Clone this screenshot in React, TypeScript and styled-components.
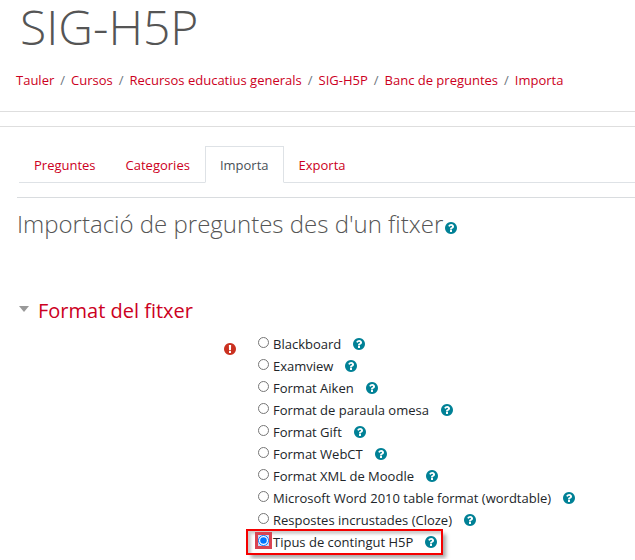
import React, { useState } from "react";
import styled, { createGlobalStyle } from "styled-components";

const GlobalStyle = createGlobalStyle`
  *, *::before, *::after { box-sizing: border-box; }
  body {
    margin: 0;
    background: #fff;
    color: #212529;
    font-family: "Open Sans", "Noto Sans", sans-serif;
    font-size: 13px;
    line-height: 22px;
  }
  a { color: #cc0022; text-decoration: none; }
  a:hover { text-decoration: underline; }
`;

const Header = styled.header`
  padding: 0 16px 20px;
  border-bottom: 1px solid #dedede;
`;

const Title = styled.h1`
  margin: 0;
  padding-left: 4px;
  color: #555;
  font-size: 48px;
  font-weight: 300;
  line-height: 54px;
`;

const Breadcrumb = styled.ol`
  display: flex;
  margin: 0;
  padding: 15px 0 0;
  list-style: none;
  white-space: nowrap;
`;

const Crumb = styled.li`
  & + &::before {
    content: "/";
    padding: 0 6px;
    color: #6c757d;
  }
`;

const Main = styled.main`
  margin-top: 14px;
  padding: 19px 0 6px 17px;
  border-top: 1px solid #dedede;
`;

const Tabs = styled.nav`
  display: flex;
  margin-left: 2px;
  border-bottom: 1px solid #dee2e6;
`;

const Tab = styled.a<{ $active?: boolean }>`
  margin-bottom: -1px;
  padding: 7px 14px 6px;
  border: 1px solid transparent;
  ${(p) =>
    p.$active &&
    `
    border-color: #dee2e6 #dee2e6 #fff;
    background: #fff;
    color: #495057;
  `}
`;

const PageTitle = styled.h2`
  display: flex;
  align-items: center;
  gap: 2px;
  margin: 14px 0 0;
  padding-top: 9px;
  border-top: 1px solid #d9dcdf;
  color: #555;
  font-size: 24px;
  font-weight: 300;
  line-height: 34px;
  white-space: nowrap;
`;

const HelpButton = styled.button`
  display: inline-flex;
  padding: 0;
  border: 0;
  background: none;
  color: #008196;
  cursor: pointer;

  ${PageTitle} & { margin-top: 8px; }
`;

const Glyph = styled.svg`
  display: block;
  width: 12px;
  height: 12px;
  fill: currentColor;
`;

const Section = styled.form`
  margin-top: 56px;
`;

const SectionToggle = styled.button`
  display: flex;
  align-items: center;
  gap: 9px;
  padding: 0 0 0 2px;
  border: 0;
  background: none;
  color: #cc0022;
  font: inherit;
  font-size: 20px;
  line-height: 28px;
  cursor: pointer;
`;

const Caret = styled.svg`
  width: 10px;
  height: 6px;
  margin-bottom: 4px;
  fill: #999;
`;

const Field = styled.div`
  display: grid;
  grid-template-columns: 231px 1fr;
  margin-top: 8px;
`;

const Required = styled.span`
  justify-self: end;
  margin: 10px 12px 0 0;
  color: #ca3120;
`;

const Options = styled.fieldset`
  display: flex;
  flex-direction: column;
  align-items: flex-start;
  min-width: 0;
  margin: 0;
  padding: 0;
  border: 0;
`;

const Option = styled.div<{ $marked: boolean }>`
  display: flex;
  align-items: center;
  gap: 12px;
  height: 22px;
  padding: 0 4px 0 7px;
  white-space: nowrap;
  ${(p) =>
    p.$marked &&
    `
    outline: 2px solid #f50000;
    box-shadow: 4px 4px 4px 1px rgba(0, 0, 0, 0.35), inset 3px 3px 3px rgba(0, 0, 0, 0.2);
  `}
`;

const OptionLabel = styled.label`
  display: flex;
  align-items: center;
  gap: 1px;
  cursor: pointer;
`;

const RadioFrame = styled.span<{ $marked: boolean }>`
  display: flex;
  margin-bottom: 4px;
  border: 3px solid ${(p) => (p.$marked ? "#d94452" : "transparent")};
  background: ${(p) => (p.$marked ? "#c4dcfa" : "transparent")};
`;

const Radio = styled.input`
  width: 11px;
  height: 11px;
  margin: 0;
`;

const crumbs = ["Tauler", "Cursos", "Recursos educatius generals", "SIG-H5P", "Banc de preguntes", "Importa"];
const tabs = ["Preguntes", "Categories", "Importa", "Exporta"];
const formats = [
  "Blackboard",
  "Examview",
  "Format Aiken",
  "Format de paraula omesa",
  "Format Gift",
  "Format WebCT",
  "Format XML de Moodle",
  "Microsoft Word 2010 table format (wordtable)",
  "Respostes incrustades (Cloze)",
  "Tipus de contingut H5P",
];

const Help = ({ topic }: { topic: string }) => (
  <HelpButton type="button" aria-label={`Ajuda: ${topic}`}>
    <Glyph viewBox="0 128 1536 1536" aria-hidden="true">
      <path d="M896 1376v-192q0-14-9-23t-23-9H672q-14 0-23 9t-9 23v192q0 14 9 23t23 9h192q14 0 23-9t9-23zm256-672q0-88-55.5-163T958 425t-170-41q-243 0-371 213-15 24 8 42l132 100q7 6 19 6 16 0 25-12 53-68 86-92 34-24 86-24 48 0 85.5 26t37.5 59q0 38-20 61t-68 45q-63 28-115.5 86.5T640 1020v36q0 14 9 23t23 9h192q14 0 23-9t9-23q0-19 21.5-49.5T972 957q32-18 49-28.5t46-35 44.5-48 28-60.5 12.5-81zm384 192q0 209-103 385.5T1153.5 1561 768 1664t-385.5-103T103 1281.5 0 896t103-385.5T382.5 231 768 128t385.5 103T1433 510.5 1536 896z" />
    </Glyph>
  </HelpButton>
);

export default function App() {
  const [selected, setSelected] = useState("Tipus de contingut H5P");
  const [open, setOpen] = useState(true);

  return (
    <>
      <GlobalStyle />
      <Header>
        <Title>SIG-H5P</Title>
        <nav aria-label="Camí de navegació">
          <Breadcrumb>
            {crumbs.map((c) => (
              <Crumb key={c}>
                <a href="#">{c}</a>
              </Crumb>
            ))}
          </Breadcrumb>
        </nav>
      </Header>
      <Main>
        <Tabs>
          {tabs.map((t) => (
            <Tab key={t} href="#" $active={t === "Importa"} aria-current={t === "Importa" ? "page" : undefined}>
              {t}
            </Tab>
          ))}
        </Tabs>
        <PageTitle>
          Importació de preguntes des d'un fitxer
          <Help topic="Importació de preguntes" />
        </PageTitle>
        <Section>
          <SectionToggle type="button" aria-expanded={open} onClick={() => setOpen(!open)}>
            <Caret viewBox="0 0 10 6" aria-hidden="true">
              <path d="M0 0h10L5 6z" />
            </Caret>
            Format del fitxer
          </SectionToggle>
          {open && (
            <Field>
              <Required>
                <Glyph viewBox="0 128 1536 1536" role="img" aria-label="Necessari">
                  <path d="M768 128q209 0 385.5 103T1433 510.5 1536 896t-103 385.5-279.5 279.5T768 1664t-385.5-103T103 1281.5 0 896t103-385.5T382.5 231 768 128zm128 1247v-190q0-14-9-23.5t-22-9.5H673q-13 0-23 10t-10 23v190q0 13 10 23t23 10h192q13 0 22-9.5t9-23.5zm-2-344l18-621q0-12-10-18-10-8-24-8H658q-14 0-24 8-10 6-10 18l17 621q0 10 10 17.5t24 7.5h185q14 0 23.5-7.5t10.5-17.5z" />
                </Glyph>
              </Required>
              <Options aria-label="Format del fitxer">
                {formats.map((f) => (
                  <Option key={f} $marked={f === selected}>
                    <OptionLabel>
                      <RadioFrame $marked={f === selected}>
                        <Radio
                          type="radio"
                          name="format"
                          value={f}
                          checked={f === selected}
                          onChange={() => setSelected(f)}
                        />
                      </RadioFrame>
                      {f}
                    </OptionLabel>
                    <Help topic={f} />
                  </Option>
                ))}
              </Options>
            </Field>
          )}
        </Section>
      </Main>
    </>
  );
}
